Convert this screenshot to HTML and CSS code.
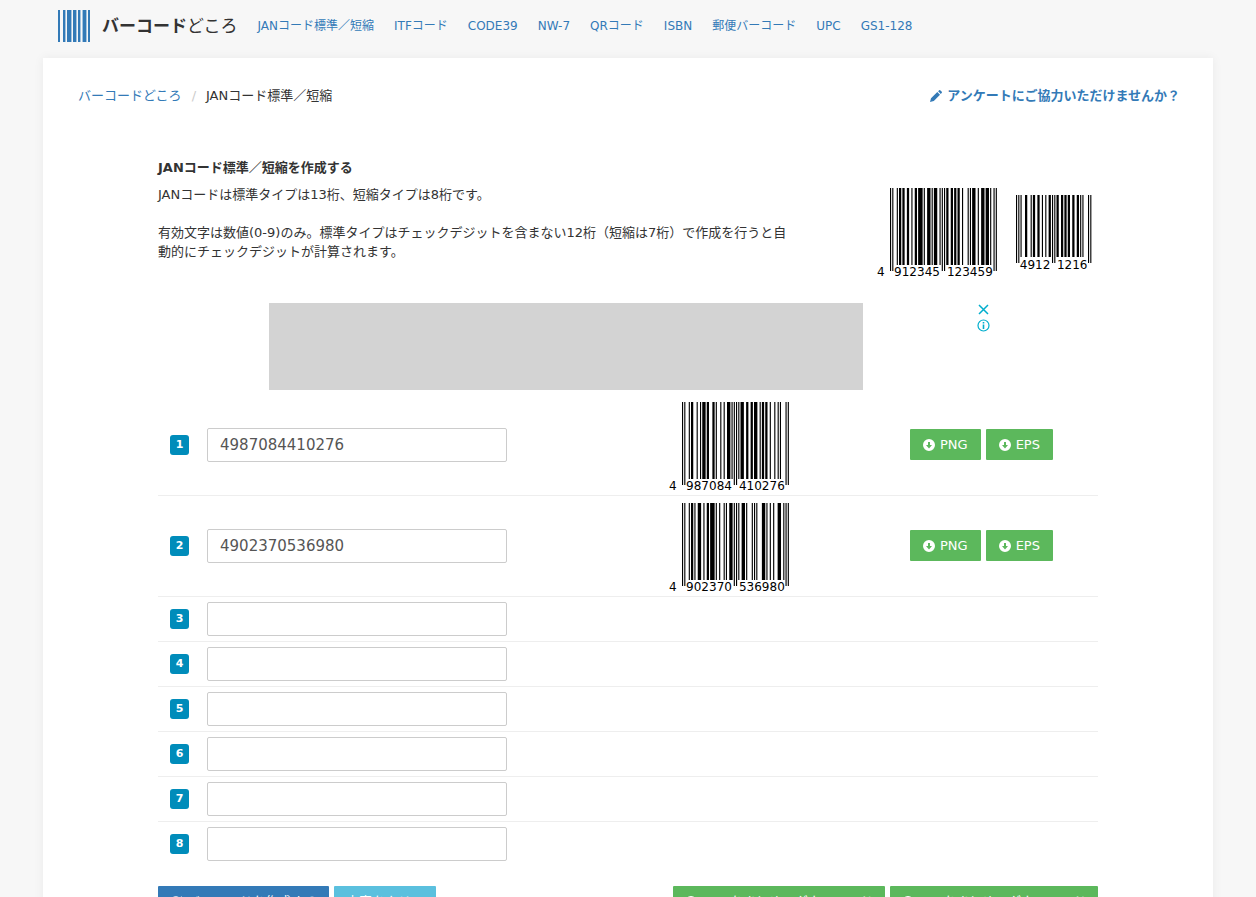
FILE: index.html
```html
<!DOCTYPE html>
<html lang="ja">
<head>
<meta charset="utf-8">
<title>JANコード標準／短縮 - バーコードどころ</title>
<link rel="stylesheet" href="styles.css">
</head>
<body>
<svg class="sprite" aria-hidden="true">
  <symbol id="download" viewBox="0 0 12 12"><path fill="currentColor" fill-rule="evenodd" d="M6 0a6 6 0 1 1 0 12A6 6 0 0 1 6 0zM5 3v3H3l3 3.4L9 6H7V3z"/></symbol>
  <symbol id="refresh" viewBox="0 0 12 12"><path fill="none" stroke="currentColor" stroke-width="1.8" d="M1.2 5.6A4.7 4.7 0 0 1 9.4 2.8M10.8 6.4A4.7 4.7 0 0 1 2.6 9.2"/><path fill="currentColor" d="M11.6 0v5H6.6zM.4 12V7h5z"/></symbol>
</svg>

<header class="navbar">
  <a class="brand" href="#">
    <svg class="brand-mark" width="32" height="32" viewBox="0 0 32 32" aria-hidden="true">
      <path fill="#337ab7" d="M0 0h2v32H0zM5 0h2v32H5zM9 0h4v32H9zM15 0h3v32h-3zM20 0h2v32h-2zM25 0h3v32h-3zM30 0h2v32h-2z"/>
      <path fill="#a3c3df" d="M7 0h1v32H7zM13 0h1v32h-1zM18 0h1v32h-1zM22 0h1v32h-1zM24 0h1v32h-1zM28 0h1v32h-1z"/>
    </svg>
    <span><b>バーコード</b>どころ</span>
  </a>
  <nav class="nav">
    <a href="#">JANコード標準／短縮</a>
    <a href="#">ITFコード</a>
    <a href="#">CODE39</a>
    <a href="#">NW-7</a>
    <a href="#">QRコード</a>
    <a href="#">ISBN</a>
    <a href="#">郵便バーコード</a>
    <a href="#">UPC</a>
    <a href="#">GS1-128</a>
  </nav>
</header>

<main class="page">
  <div class="topline">
    <nav class="breadcrumb">
      <a href="#">バーコードどころ</a><span class="slash">/</span><span>JANコード標準／短縮</span>
    </nav>
    <a class="survey" href="#">
      <svg width="12" height="12" viewBox="0 0 12 12" aria-hidden="true"><path fill="currentColor" d="M0 12l1-3.8L7.3 2 10 4.7 3.8 11zM8.1 1.2L9.2.2q.5-.4 1 0l1.600 1.600q.4.500 0 1L10.800 3.900z"/></svg>
      アンケートにご協力いただけませんか？
    </a>
  </div>

  <div class="content">
    <section class="intro">
      <div class="intro-text">
        <h1>JANコード標準／短縮を作成する</h1>
        <p>JANコードは標準タイプは13桁、短縮タイプは8桁です。</p>
        <p>有効文字は数値(0-9)のみ。標準タイプはチェックデジットを含まない12桁（短縮は7桁）で作成を行うと自動的にチェックデジットが計算されます。</p>
      </div>
      <div class="samples">
        <svg class="barcode" data-code="4912345123459"></svg>
        <svg class="barcode" data-code="49121216"></svg>
      </div>
    </section>

    <div class="ad">
      <div class="ad-box"></div>
      <div class="ad-tools">
        <button type="button" aria-label="閉じる"><svg width="13" height="13" viewBox="0 0 13 13"><path fill="none" stroke="currentColor" stroke-width="1.500" d="M2 2l9 9M11 2l-9 9"/></svg></button>
        <button type="button" aria-label="広告情報"><svg width="13" height="13" viewBox="0 0 13 13"><circle cx="6.500" cy="6.500" r="5.500" fill="none" stroke="currentColor" stroke-width="1.200"/><path fill="currentColor" d="M5.700 3h1.600v1.500H5.700zM5.700 5.400h1.600V10H5.700z"/></svg></button>
      </div>
    </div>

    <form>
      <div class="row">
        <label class="badge" for="c1">1</label><input id="c1" type="text" value="4987084410276">
        <svg class="barcode" data-code="4987084410276"></svg>
        <div class="actions">
          <button class="btn green" type="button"><svg class="icon"><use href="#download"/></svg>PNG</button>
          <button class="btn green" type="button"><svg class="icon"><use href="#download"/></svg>EPS</button>
        </div>
      </div>
      <div class="row">
        <label class="badge" for="c2">2</label><input id="c2" type="text" value="4902370536980">
        <svg class="barcode" data-code="4902370536980"></svg>
        <div class="actions">
          <button class="btn green" type="button"><svg class="icon"><use href="#download"/></svg>PNG</button>
          <button class="btn green" type="button"><svg class="icon"><use href="#download"/></svg>EPS</button>
        </div>
      </div>
      <div class="row"><label class="badge" for="c3">3</label><input id="c3" type="text"></div>
      <div class="row"><label class="badge" for="c4">4</label><input id="c4" type="text"></div>
      <div class="row"><label class="badge" for="c5">5</label><input id="c5" type="text"></div>
      <div class="row"><label class="badge" for="c6">6</label><input id="c6" type="text"></div>
      <div class="row"><label class="badge" for="c7">7</label><input id="c7" type="text"></div>
      <div class="row"><label class="badge" for="c8">8</label><input id="c8" type="text"></div>
      <div class="footer-actions">
        <button class="btn blue" type="button"><svg class="icon"><use href="#refresh"/></svg>バーコードを作成する</button>
        <button class="btn cyan" type="button">内容をクリア</button>
        <button class="btn green push" type="button"><svg class="icon"><use href="#download"/></svg>PNGをまとめてダウンロード</button>
        <button class="btn green" type="button"><svg class="icon"><use href="#download"/></svg>EPSをまとめてダウンロード</button>
      </div>
    </form>
  </div>
</main>
<script src="barcode.js"></script>
</body>
</html>
```
FILE: styles.css
```css
* { box-sizing: border-box; }

body {
  margin: 0;
  background: #f7f7f7;
  color: #333;
  font-family: "DejaVu Sans", "Noto Sans CJK JP", sans-serif;
  font-size: 13px;
  line-height: 19px;
}

a { color: #337ab7; text-decoration: none; }

.sprite { display: none; }

.navbar {
  display: flex;
  align-items: center;
  gap: 20px;
  max-width: 1170px;
  height: 52px;
  margin: 0 auto;
  padding: 0 15px;
}

.brand {
  display: flex;
  align-items: center;
  gap: 12px;
  color: #333;
  font-size: 17px;
  white-space: nowrap;
}

.nav {
  display: flex;
  gap: 20px;
  font-size: 12px;
  white-space: nowrap;
}

.page {
  max-width: 1170px;
  margin: 6px auto 0;
  padding: 28px 33px 40px;
  background: #fff;
  box-shadow: 0 0 10px rgba(0, 0, 0, 0.06);
}

.topline {
  display: flex;
  justify-content: space-between;
  padding-left: 2px;
}

.slash { padding: 0 10px; color: #ccc; }

.survey {
  display: flex;
  align-items: center;
  gap: 5px;
  font-weight: bold;
}

.content {
  max-width: 940px;
  margin: 53px auto 0;
}

.intro {
  display: flex;
  justify-content: space-between;
}

.intro-text { max-width: 632px; }

h1 {
  margin: 0 0 8px;
  font-size: 13px;
  line-height: 19px;
}

p { margin: 0 0 19px; }

.samples {
  display: flex;
  align-items: center;
  gap: 18px;
  margin: 24px 6px 0 0;
}

.barcode {
  display: block;
  overflow: visible;
}

.barcode text {
  font-family: "DejaVu Sans", sans-serif;
  font-size: 12px;
}

.ad {
  display: flex;
  gap: 114px;
  padding: 23px 0 5px 111px;
}

.ad-box {
  width: 594px;
  height: 87px;
  background: #d3d3d3;
}

.ad-tools {
  display: flex;
  flex-direction: column;
  gap: 3px;
}

.ad-tools button {
  height: 13px;
  padding: 0;
  border: 0;
  background: none;
  color: #00aecd;
}

.ad-tools svg { display: block; }

.row {
  display: grid;
  grid-template-columns: 49px 1fr 240px 188px;
  align-items: center;
  padding: 5px 0;
  border-bottom: 1px solid #eee;
}

.row:nth-child(8) { border-bottom: 0; }

.badge {
  width: 19px;
  margin-left: 12px;
  border-radius: 3px;
  background: #008cba;
  color: #fff;
  font-size: 11px;
  font-weight: bold;
  line-height: 20px;
  text-align: center;
}

input {
  width: 300px;
  height: 34px;
  padding: 0 12px;
  border: 1px solid #ccc;
  border-radius: 2px;
  color: #555;
  font: inherit;
  font-size: 15px;
}

.actions {
  display: flex;
  gap: 5px;
  padding-bottom: 1px;
}

.btn {
  display: flex;
  align-items: center;
  gap: 5px;
  height: 31px;
  padding: 0 13px;
  border: 0;
  border-radius: 1px;
  color: #fff;
  font: inherit;
  white-space: nowrap;
}

.icon { width: 12px; height: 12px; }
.green { background: #5cb85c; }
.blue { background: #337ab7; }
.cyan { background: #5bc0de; }

.footer-actions {
  display: flex;
  gap: 5px;
  padding-top: 20px;
}

.footer-actions .btn { padding: 0 12px; }

.push { margin-left: auto; }
```
FILE: barcode.js
```js
// Draws EAN-13 and EAN-8 symbols into every svg.barcode element.
const L = ['0001101', '0011001', '0010011', '0111101', '0100011', '0110001', '0101111', '0111011', '0110111', '0001011'];
const R = L.map(s => s.replace(/./g, b => (b === '0' ? '1' : '0')));
const G = R.map(s => [...s].reverse().join(''));
const PARITY = ['LLLLLL', 'LLGLGG', 'LLGGLG', 'LLGGGL', 'LGLLGG', 'LGGLLG', 'LGGGLL', 'LGLGLG', 'LGLGGL', 'LGGLGL'];
const MODULE = 1.125;

function draw(svg) {
  const code = svg.dataset.code;
  const long = code.length === 13;
  const half = long ? 6 : 4;
  const digits = long ? code.slice(1) : code;
  const parity = long ? PARITY[code[0]] : 'LLLL';
  const left = [...digits.slice(0, half)].map((d, i) => (parity[i] === 'G' ? G : L)[d]).join('');
  const right = [...digits.slice(half)].map(d => R[d]).join('');
  const bits = '101' + left + '01010' + right + '101';
  const x0 = long ? 12 : 0;
  const bottom = long ? 79 : 64;
  const width = long ? 120 : 76;
  const height = long ? 90 : 76;
  const middle = 3 + half * 7;
  let out = '';
  for (const m of bits.matchAll(/1+/g)) {
    const i = m.index;
    const guard = i < 3 || i >= bits.length - 3 || (i >= middle && i < middle + 5);
    out += `<rect x="${x0 + i * MODULE}" y="2" width="${m[0].length * MODULE}" height="${bottom - 2 + (guard ? 6 : 0)}"/>`;
  }
  const y = height;
  const center = start => x0 + (start + half * 3.5) * MODULE;
  if (long) out += `<text x="-1" y="${y}">${code[0]}</text>`;
  out += `<text text-anchor="middle" x="${center(3)}" y="${y}">${digits.slice(0, half)}</text>`;
  out += `<text text-anchor="middle" x="${center(middle + 5)}" y="${y}">${digits.slice(half)}</text>`;
  svg.setAttribute('width', width);
  svg.setAttribute('height', height);
  svg.setAttribute('role', 'img');
  svg.setAttribute('aria-label', code);
  svg.innerHTML = out;
}

document.querySelectorAll('.barcode').forEach(draw);
```
